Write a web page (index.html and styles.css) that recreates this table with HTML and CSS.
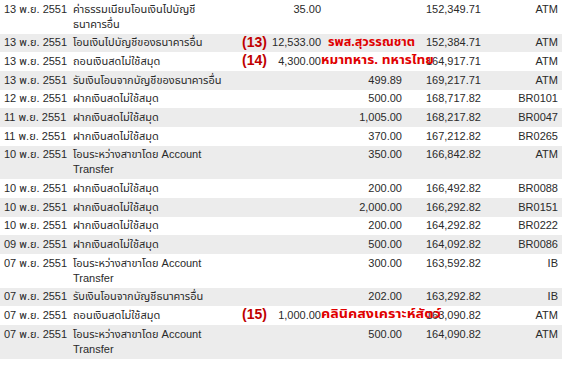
FILE: index.html
```html
<!DOCTYPE html>
<html lang="th">
<head>
<meta charset="utf-8">
<title>Statement</title>
<link rel="stylesheet" href="styles.css">
</head>
<body>
<table class="stmt">
  <colgroup>
    <col class="c-date"><col class="c-desc"><col class="c-wd"><col class="c-dep"><col class="c-bal"><col class="c-ch">
  </colgroup>
  <tbody>
    <tr><td class="date">13 พ.ย. 2551</td><td class="desc">ค่าธรรมเนียมโอนเงินไปบัญชี<br>ธนาคารอื่น</td><td class="num">35.00</td><td class="num"></td><td class="num">152,349.71</td><td class="ch">ATM</td></tr>
    <tr><td class="date">13 พ.ย. 2551</td><td class="desc">โอนเงินไปบัญชีของธนาคารอื่น</td><td class="num wd"><span class="tag">(13)</span>12,533.00<span class="memo m1">รพส.สุวรรณชาต</span></td><td class="num"></td><td class="num">152,384.71</td><td class="ch">ATM</td></tr>
    <tr><td class="date">13 พ.ย. 2551</td><td class="desc">ถอนเงินสดไม่ใช้สมุด</td><td class="num wd"><span class="tag">(14)</span>4,300.00<span class="memo m2">หมาทหาร. ทหารไทย</span></td><td class="num"></td><td class="num">164,917.71</td><td class="ch">ATM</td></tr>
    <tr><td class="date">13 พ.ย. 2551</td><td class="desc">รับเงินโอนจากบัญชีของธนาคารอื่น</td><td class="num"></td><td class="num">499.89</td><td class="num">169,217.71</td><td class="ch">ATM</td></tr>
    <tr><td class="date">12 พ.ย. 2551</td><td class="desc">ฝากเงินสดไม่ใช้สมุด</td><td class="num"></td><td class="num">500.00</td><td class="num">168,717.82</td><td class="ch">BR0101</td></tr>
    <tr><td class="date">11 พ.ย. 2551</td><td class="desc">ฝากเงินสดไม่ใช้สมุด</td><td class="num"></td><td class="num">1,005.00</td><td class="num">168,217.82</td><td class="ch">BR0047</td></tr>
    <tr><td class="date">11 พ.ย. 2551</td><td class="desc">ฝากเงินสดไม่ใช้สมุด</td><td class="num"></td><td class="num">370.00</td><td class="num">167,212.82</td><td class="ch">BR0265</td></tr>
    <tr><td class="date">10 พ.ย. 2551</td><td class="desc">โอนระหว่างสาขาโดย Account<br>Transfer</td><td class="num"></td><td class="num">350.00</td><td class="num">166,842.82</td><td class="ch">ATM</td></tr>
    <tr><td class="date">10 พ.ย. 2551</td><td class="desc">ฝากเงินสดไม่ใช้สมุด</td><td class="num"></td><td class="num">200.00</td><td class="num">166,492.82</td><td class="ch">BR0088</td></tr>
    <tr><td class="date">10 พ.ย. 2551</td><td class="desc">ฝากเงินสดไม่ใช้สมุด</td><td class="num"></td><td class="num">2,000.00</td><td class="num">166,292.82</td><td class="ch">BR0151</td></tr>
    <tr><td class="date">10 พ.ย. 2551</td><td class="desc">ฝากเงินสดไม่ใช้สมุด</td><td class="num"></td><td class="num">200.00</td><td class="num">164,292.82</td><td class="ch">BR0222</td></tr>
    <tr><td class="date">09 พ.ย. 2551</td><td class="desc">ฝากเงินสดไม่ใช้สมุด</td><td class="num"></td><td class="num">500.00</td><td class="num">164,092.82</td><td class="ch">BR0086</td></tr>
    <tr><td class="date">07 พ.ย. 2551</td><td class="desc">โอนระหว่างสาขาโดย Account<br>Transfer</td><td class="num"></td><td class="num">300.00</td><td class="num">163,592.82</td><td class="ch">IB</td></tr>
    <tr><td class="date">07 พ.ย. 2551</td><td class="desc">รับเงินโอนจากบัญชีธนาคารอื่น</td><td class="num"></td><td class="num">202.00</td><td class="num">163,292.82</td><td class="ch">IB</td></tr>
    <tr><td class="date">07 พ.ย. 2551</td><td class="desc">ถอนเงินสดไม่ใช้สมุด</td><td class="num wd"><span class="tag">(15)</span>1,000.00<span class="memo m3">คลินิคสงเคราะห์สัตว์</span></td><td class="num"></td><td class="num">163,090.82</td><td class="ch">ATM</td></tr>
    <tr><td class="date">07 พ.ย. 2551</td><td class="desc">โอนระหว่างสาขาโดย Account<br>Transfer</td><td class="num"></td><td class="num">500.00</td><td class="num">164,090.82</td><td class="ch">ATM</td></tr>
  </tbody>
</table>
</body>
</html>
```

FILE: styles.css
```css
html, body {
  margin: 0;
  padding: 0;
  background: #ffffff;
}

.stmt {
  width: 562px;
  table-layout: fixed;
  border-collapse: collapse;
  font-family: Tahoma, "Liberation Sans", "Noto Sans Thai", "Noto Sans", sans-serif;
  font-size: 11px;
  line-height: 15px;
  color: #2a2a2a;
}

.c-date { width: 70px; }
.c-desc { width: 170px; }
.c-wd { width: 85px; }
.c-dep { width: 81px; }
.c-bal { width: 79px; }
.c-ch { width: 77px; }

.stmt td {
  padding: 1.83px 0;
  vertical-align: top;
  white-space: nowrap;
}

.stmt tr:nth-child(even) td {
  background: #ececec;
}

.date {
  padding-left: 4px !important;
}

.desc {
  padding-left: 3px !important;
}

.num {
  text-align: right;
  padding-right: 4px !important;
}

.ch {
  text-align: right;
  padding-right: 4px !important;
}

.wd {
  position: relative;
}

.tag {
  position: absolute;
  left: 2px;
  top: 1px;
  font-size: 14px;
  font-weight: bold;
  color: #c00000;
  line-height: 15px;
}

.memo {
  position: absolute;
  top: 1px;
  font-size: 12px;
  font-weight: bold;
  color: #e00000;
  line-height: 15px;
  transform-origin: left center;
  z-index: 2;
}

.m1 { left: 88px; transform: scaleX(1.05); }
.m2 { left: 81px; transform: scaleX(1.13); }
.m3 { left: 81px; transform: scaleX(1.19); }
```
